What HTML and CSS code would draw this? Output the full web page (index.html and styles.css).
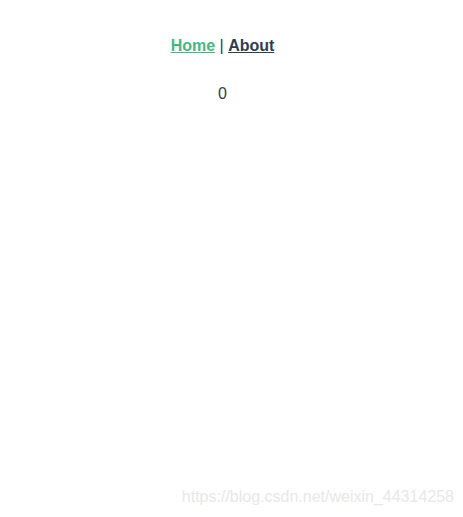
FILE: index.html
```html
<!DOCTYPE html>
<html lang="en">
<head>
  <meta charset="UTF-8" />
  <meta name="viewport" content="width=device-width, initial-scale=1" />
  <title>app</title>
  <link rel="stylesheet" href="styles.css">
</head>
<body>

  <div id="app">
    <div id="nav">
      <a href="#/" class="router-link-exact-active">Home</a> |
      <a href="#/about">About</a>
    </div>
    <div class="count">0</div>
  </div>

  <div class="watermark">https://blog.csdn.net/weixin_44314258</div>

</body>
</html>
```
FILE: styles.css
```css
body {
  margin: 7px 8px 8px;
  background: #fff;
}
#app {
  font-family: "Liberation Sans", Arial, sans-serif;
  -webkit-font-smoothing: antialiased;
  text-align: center;
  color: #2c3e50;
  margin-right: 18px;
}
#nav {
  padding: 30px;
}
#nav a {
  font-weight: bold;
  color: #2c3e50;
}
#nav a.router-link-exact-active {
  color: #42b983;
}
.watermark {
  position: absolute;
  right: 9px;
  bottom: 11px;
  font-family: "Liberation Sans", Arial, sans-serif;
  font-size: 16px;
  color: #e8e8e8;
}
```
